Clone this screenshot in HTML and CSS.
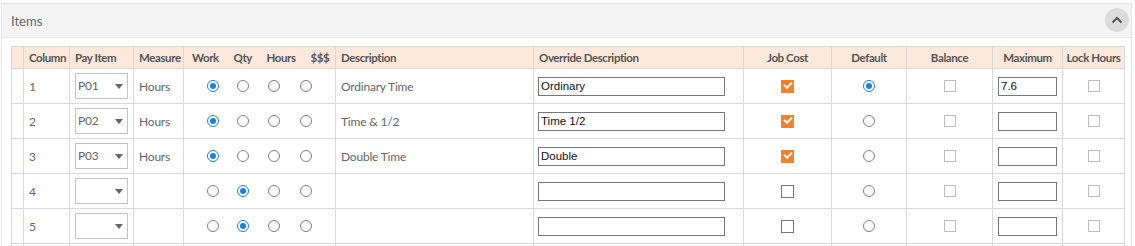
FILE: index.html
```html
<!DOCTYPE html>
<html lang="en">
<head>
    <meta charset="UTF-8">
    <title>Items</title>
    <link rel="stylesheet" href="styles.css">
</head>
<body>
    <div class="panel">
        <div class="panel-header">
            <span class="panel-title">Items</span>
            <button class="collapse-btn">
                <svg width="12" height="8" viewBox="0 0 12 8"><path d="M1.5 6.5 L6 2 L10.5 6.5" fill="none" stroke="#555" stroke-width="2"/></svg>
            </button>
        </div>
        <div class="panel-body">
            <table class="items">
                <colgroup>
                    <col class="c-handle"><col class="c-col"><col class="c-pay"><col class="c-measure">
                    <col class="c-work"><col class="c-qty"><col class="c-hours"><col class="c-money">
                    <col class="c-desc"><col class="c-override"><col class="c-job"><col class="c-default">
                    <col class="c-balance"><col class="c-max"><col class="c-lock">
                </colgroup>
                <thead>
                    <tr>
                        <th></th>
                        <th>Column</th>
                        <th>Pay Item</th>
                        <th>Measure</th>
                        <th class="h-work nb">Work</th>
                        <th class="h-qty nb">Qty</th>
                        <th class="h-hours nb">Hours</th>
                        <th class="h-money">$$$</th>
                        <th>Description</th>
                        <th>Override Description</th>
                        <th class="ctr">Job Cost</th>
                        <th class="ctr">Default</th>
                        <th class="ctr">Balance</th>
                        <th class="ctr">Maximum</th>
                        <th class="ctr">Lock Hours</th>
                    </tr>
                </thead>
                <tbody>
                    <tr>
                        <td></td>
                        <td>1</td>
                        <td><span class="select">P01</span></td>
                        <td>Hours</td>
                        <td class="r-work nb"><span class="radio on"></span></td>
                        <td class="r-qty nb"><span class="radio"></span></td>
                        <td class="r-hours nb"><span class="radio"></span></td>
                        <td class="r-money"><span class="radio"></span></td>
                        <td>Ordinary Time</td>
                        <td><input class="text-input wide" type="text" value="Ordinary"></td>
                        <td class="ctr"><span class="check on"></span></td>
                        <td class="ctr"><span class="radio on"></span></td>
                        <td class="ctr"><span class="check light"></span></td>
                        <td><input class="text-input short" type="text" value="7.6"></td>
                        <td class="ctr"><span class="check light"></span></td>
                    </tr>
                    <tr>
                        <td></td>
                        <td>2</td>
                        <td><span class="select">P02</span></td>
                        <td>Hours</td>
                        <td class="r-work nb"><span class="radio on"></span></td>
                        <td class="r-qty nb"><span class="radio"></span></td>
                        <td class="r-hours nb"><span class="radio"></span></td>
                        <td class="r-money"><span class="radio"></span></td>
                        <td>Time &amp; 1/2</td>
                        <td><input class="text-input wide" type="text" value="Time 1/2"></td>
                        <td class="ctr"><span class="check on"></span></td>
                        <td class="ctr"><span class="radio"></span></td>
                        <td class="ctr"><span class="check light"></span></td>
                        <td><input class="text-input short" type="text" value=""></td>
                        <td class="ctr"><span class="check light"></span></td>
                    </tr>
                    <tr>
                        <td></td>
                        <td>3</td>
                        <td><span class="select">P03</span></td>
                        <td>Hours</td>
                        <td class="r-work nb"><span class="radio on"></span></td>
                        <td class="r-qty nb"><span class="radio"></span></td>
                        <td class="r-hours nb"><span class="radio"></span></td>
                        <td class="r-money"><span class="radio"></span></td>
                        <td>Double Time</td>
                        <td><input class="text-input wide" type="text" value="Double"></td>
                        <td class="ctr"><span class="check on"></span></td>
                        <td class="ctr"><span class="radio"></span></td>
                        <td class="ctr"><span class="check light"></span></td>
                        <td><input class="text-input short" type="text" value=""></td>
                        <td class="ctr"><span class="check light"></span></td>
                    </tr>
                    <tr>
                        <td></td>
                        <td>4</td>
                        <td><span class="select"></span></td>
                        <td></td>
                        <td class="r-work nb"><span class="radio"></span></td>
                        <td class="r-qty nb"><span class="radio on"></span></td>
                        <td class="r-hours nb"><span class="radio"></span></td>
                        <td class="r-money"><span class="radio"></span></td>
                        <td></td>
                        <td><input class="text-input wide" type="text" value=""></td>
                        <td class="ctr"><span class="check"></span></td>
                        <td class="ctr"><span class="radio"></span></td>
                        <td class="ctr"><span class="check light"></span></td>
                        <td><input class="text-input short" type="text" value=""></td>
                        <td class="ctr"><span class="check light"></span></td>
                    </tr>
                    <tr>
                        <td></td>
                        <td>5</td>
                        <td><span class="select"></span></td>
                        <td></td>
                        <td class="r-work nb"><span class="radio"></span></td>
                        <td class="r-qty nb"><span class="radio on"></span></td>
                        <td class="r-hours nb"><span class="radio"></span></td>
                        <td class="r-money"><span class="radio"></span></td>
                        <td></td>
                        <td><input class="text-input wide" type="text" value=""></td>
                        <td class="ctr"><span class="check"></span></td>
                        <td class="ctr"><span class="radio"></span></td>
                        <td class="ctr"><span class="check light"></span></td>
                        <td><input class="text-input short" type="text" value=""></td>
                        <td class="ctr"><span class="check light"></span></td>
                    </tr>
                    <tr class="row-more">
                        <td></td><td></td><td></td><td></td>
                        <td class="nb"></td><td class="nb"></td><td class="nb"></td><td></td>
                        <td></td><td></td><td></td><td></td><td></td><td></td><td></td>
                    </tr>
                </tbody>
            </table>
        </div>
    </div>
</body>
</html>
```

FILE: styles.css
```css
body {
    margin: 0;
    background-color: #fff;
    font-family: Lato, "Open Sans", sans-serif;
    color: #666;
}

.panel {
    margin: 3px 3px 0 1px;
    border: 1px solid #e6e6e6;
    border-bottom: none;
}

.panel-header {
    display: flex;
    align-items: center;
    justify-content: space-between;
    height: 33px;
    padding: 0 2px 0 9px;
    background-color: #f4f4f4;
    border-bottom: 1px solid #e6e6e6;
}

.panel-title {
    font-size: 13px;
    color: #666;
}

.collapse-btn {
    width: 24px;
    height: 24px;
    margin-top: -2px;
    border: none;
    border-radius: 50%;
    background-color: #dcdcdc;
    display: flex;
    align-items: center;
    justify-content: center;
    padding: 0;
}

.panel-body {
    padding: 8px 7px 0 9px;
}

.items {
    width: 1113px;
    table-layout: fixed;
    border-collapse: collapse;
    font-size: 12px;
}

.c-handle { width: 12px; }
.c-col { width: 46px; }
.c-pay { width: 64px; }
.c-measure { width: 50px; }
.c-work { width: 44px; }
.c-qty { width: 31px; }
.c-hours { width: 40px; }
.c-money { width: 37px; }
.c-desc { width: 198px; }
.c-override { width: 210px; }
.c-job { width: 88px; }
.c-default { width: 75px; }
.c-balance { width: 86px; }
.c-max { width: 70px; }
.c-lock { width: 62px; }

.items th,
.items td {
    border: 1px solid #d9d9d9;
    padding: 0 0 0 5px;
    text-align: left;
    white-space: nowrap;
    overflow: hidden;
}

.items th {
    height: 21px;
    background-color: #fde9dc;
    color: #555;
    font-weight: bold;
    font-size: 11.5px;
    letter-spacing: -0.4px;
}

.items td {
    height: 34px;
    color: #666;
    letter-spacing: -0.2px;
}

.items .row-more td {
    height: 20px;
}

.items .nb {
    border-right: none;
}

.items .h-work + th,
.items .h-qty + th,
.items .h-hours + th,
.items .nb + td {
    border-left: none;
}

.items .h-work { padding-left: 8px; }
.items .h-qty { padding-left: 6px; }
.items .h-hours { padding-left: 8px; }
.items .h-money { padding-left: 12px; }

.items .r-work { padding-left: 23px; }
.items .r-qty { padding-left: 9px; }
.items .r-hours { padding-left: 9px; }
.items .r-money { padding-left: 1px; }

.items .ctr {
    text-align: center;
    padding: 0;
}

.select {
    position: relative;
    display: block;
    box-sizing: border-box;
    width: 53px;
    height: 26px;
    line-height: 24px;
    padding-left: 2px;
    border: 1px solid #c4c4c4;
    color: #666;
}

.select::after {
    content: "";
    position: absolute;
    right: 4px;
    top: 10px;
    border-left: 4px solid transparent;
    border-right: 4px solid transparent;
    border-top: 5px solid #666;
}

.radio {
    display: inline-block;
    box-sizing: border-box;
    width: 12px;
    height: 12px;
    margin-top: -2px;
    border: 1px solid #808080;
    border-radius: 50%;
    vertical-align: middle;
    position: relative;
}

.radio.on {
    border-color: #1a7fe0;
}

.radio.on::after {
    content: "";
    position: absolute;
    left: 2px;
    top: 2px;
    width: 6px;
    height: 6px;
    border-radius: 50%;
    background-color: #1a7fe0;
}

.check {
    display: inline-block;
    box-sizing: border-box;
    width: 13px;
    height: 13px;
    margin-top: -2px;
    border: 1px solid #777;
    vertical-align: middle;
    position: relative;
}

.check.light {
    width: 12px;
    height: 12px;
    border-color: #bdbdbd;
}

.check.on {
    border: none;
    background-color: #f7802a;
}

.check.on::after {
    content: "";
    position: absolute;
    left: 3px;
    top: 2px;
    width: 6px;
    height: 3px;
    border-left: 2px solid #fff;
    border-bottom: 2px solid #fff;
    transform: rotate(-45deg);
}

.text-input {
    display: block;
    box-sizing: border-box;
    height: 19px;
    border: 1px solid #777;
    padding: 0 2px;
    font-family: "Liberation Sans", Arial, sans-serif;
    font-size: 11.5px;
    letter-spacing: 0;
    color: #111;
}

.wide {
    width: 187px;
    margin-left: -1px;
}

.short {
    width: 59px;
}
```
